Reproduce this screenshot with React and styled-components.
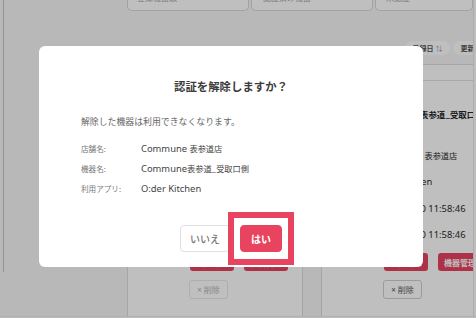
import React from "react";
import styled, { createGlobalStyle } from "styled-components";

const GlobalStyle = createGlobalStyle`
  html, body {
    margin: 0;
    padding: 0;
  }
  body {
    font-family: "Noto Sans", "Noto Sans CJK JP", sans-serif;
    color: #333;
  }
  * { box-sizing: border-box; }
`;

const RED = "#e8435f";

// page under the dialog
const Page = styled.div`
  position: relative;
  width: 476px;
  height: 318px;
  overflow: hidden;
  background: #f6f6f6;
  display: flex;
  flex-direction: column;
`;

const Body = styled.div`
  flex: 1;
  display: flex;
  overflow: hidden;
`;

const SideEdge = styled.div`
  width: 4px;
  height: 272px;
  border-right: 1px solid #c4c4c4;
  flex-shrink: 0;
`;

const Main = styled.div`
  flex: 1;
  padding-left: 123px;
  display: flex;
  flex-direction: column;
  overflow: hidden;
`;

const ScrollStrip = styled.div`
  width: 3px;
  flex-shrink: 0;
  background: #fdfdfd;
  border-left: 1px solid #e6e6e6;
`;

const BottomStrip = styled.div`
  height: 2px;
  flex-shrink: 0;
  background: #fdfdfd;
  border-top: 1px solid #ececec;
`;

const SummaryRow = styled.div`
  flex-shrink: 0;
  display: grid;
  grid-template-columns: 122px 122px 1fr;
  gap: 2px;
  height: 11px;
`;

const SummaryCard = styled.div`
  background: #fff;
  border: 1px solid #d8d8d8;
  border-top: none;
  border-radius: 0 0 5px 5px;
  overflow: hidden;
  padding-left: ${(p) => p.$pad}px;
`;

const SummaryText = styled.div`
  margin-top: -7px;
  font-size: 8px;
  line-height: 9px;
  color: #aaa;
`;

const SortBar = styled.div`
  flex-shrink: 0;
  display: flex;
  gap: 3px;
  margin-top: 30px;
  padding-left: 278px;
  height: 14px;
`;

const Pill = styled.div`
  flex-shrink: 0;
  width: ${(p) => p.$w}px;
  height: 14px;
  border-radius: 7px;
  background: #fff;
  display: flex;
  align-items: center;
  justify-content: center;
  gap: 2px;
  font-size: 7px;
  font-weight: 700;
  color: #555;
`;

const SortMark = styled.span`
  color: #999;
  font-weight: 400;
  font-size: 7px;
`;

const DeviceGrid = styled.div`
  flex-shrink: 0;
  display: grid;
  grid-template-columns: 176px 176px;
  gap: 18px;
  margin-top: 9px;
`;

const DeviceCard = styled.div`
  background: #fff;
  border: 1px solid #dedede;
  border-radius: 6px;
  height: 300px;
`;

const CardHeader = styled.div`
  height: 16px;
  border-bottom: 1px solid #e2e2e2;
`;

const CardBody = styled.div`
  padding: 25px 0 0 10px;
  display: flex;
  flex-direction: column;
`;

const InfoRow = styled.div`
  display: flex;
  align-items: center;
  height: ${(p) => (p.$title ? 16 : 26.5)}px;
  margin-bottom: ${(p) => (p.$title ? 20 : 0)}px;
  white-space: nowrap;
`;

const InfoLabel = styled.span`
  width: ${(p) => p.$w || 44}px;
  flex-shrink: 0;
  font-size: 7.5px;
  color: #777;
`;

// values: latin letters a little larger than the japanese glyphs
const MixedText = styled.span`
  font-family: "Noto Sans", "Noto Sans CJK JP", sans-serif;
  font-size: ${(p) => p.$size}px;
  font-weight: ${(p) => (p.$bold ? 700 : 400)};
  color: ${(p) => p.$color};
  white-space: nowrap;
`;

const Cjk = styled.span`
  font-family: "Noto Sans CJK JP", sans-serif;
  font-size: ${(p) => p.$size}px;
`;

const CJK_RUN = /([\u3000-\u9fff\uff00-\uffef_]+)/;

function Mixed({ text, size = 9.4, cjk = 8.2, bold, color = "#2b2b2b" }) {
  const parts = text.split(CJK_RUN).filter(Boolean);
  return (
    <MixedText $size={size} $bold={bold} $color={color}>
      {parts.map((part, i) =>
        CJK_RUN.test(part) ? (
          <Cjk key={i} $size={cjk}>
            {part}
          </Cjk>
        ) : (
          part
        )
      )}
    </MixedText>
  );
}

const CardActions = styled.div`
  display: flex;
  gap: 10px;
  margin-top: 5px;
  padding-left: 52px;
`;

const RedButton = styled.div`
  flex-shrink: 0;
  width: 44px;
  height: 18px;
  border-radius: 3px;
  background: ${RED};
  color: #fff;
  font-size: 8px;
  font-weight: 700;
  display: flex;
  align-items: center;
  justify-content: center;
`;

const DeleteButton = styled.div`
  width: 39px;
  height: 19px;
  margin: 9px 0 0 51px;
  border: 1px solid #cfcfcf;
  border-radius: 3px;
  font-size: 8px;
  color: #555;
  display: flex;
  align-items: center;
  justify-content: center;
  gap: 1px;
  opacity: ${(p) => (p.$faded ? 0.45 : 1)};
`;

// dialog layer
const Overlay = styled.div`
  position: absolute;
  inset: 0;
  background: rgba(0, 0, 0, 0.25);
`;

const Dialog = styled.div`
  position: absolute;
  left: 39px;
  top: 46px;
  width: 384px;
  height: 221px;
  background: #fff;
  border-radius: 6px;
  padding: 33px 42px 15px;
  display: flex;
  flex-direction: column;
`;

const DialogTitle = styled.div`
  text-align: center;
  font-size: 11.4px;
  line-height: 16px;
  font-weight: 700;
  color: #3c3c3c;
`;

const DialogText = styled.div`
  margin-top: 21px;
  font-size: 8.9px;
  line-height: 12px;
  color: #666;
`;

const DetailList = styled.div`
  margin-top: 10px;
  display: flex;
  flex-direction: column;
`;

const DetailRow = styled.div`
  display: flex;
  align-items: center;
  height: 20px;
`;

const DetailLabel = styled.span`
  width: 60px;
  font-size: 7.6px;
  color: #777;
`;

const ButtonRow = styled.div`
  margin-top: auto;
  display: flex;
  justify-content: center;
  gap: 10px;
`;

const DialogButton = styled.div`
  width: ${(p) => p.$w}px;
  height: 27px;
  border-radius: 4px;
  display: flex;
  align-items: center;
  justify-content: center;
  font-size: 10px;
  border: 1px solid ${(p) => (p.$primary ? RED : "#e0e0e0")};
  background: ${(p) => (p.$primary ? RED : "#fff")};
  color: ${(p) => (p.$primary ? "#fff" : "#777")};
  font-weight: ${(p) => (p.$primary ? 700 : 500)};
`;

// annotation box drawn over the confirm button
const Highlight = styled.div`
  position: absolute;
  left: 228px;
  top: 212px;
  width: 66px;
  height: 53px;
  border: 6px solid ${RED};
`;

const devices = [
  {
    name: "Commune表参道_受取口側",
    store: "Commune 表参道店",
    app: "O:der Kitchen",
    created: "2023/12/20 11:58:46",
    updated: "2023/12/20 11:58:46",
    faded: true,
  },
  {
    name: "Commune表参道_受取口側",
    store: "Commune 表参道店",
    app: "O:der Kitchen",
    created: "2023/12/20 11:58:46",
    updated: "2023/12/20 11:58:46",
    faded: false,
  },
];

function Device({ device }) {
  return (
    <DeviceCard>
      <CardHeader />
      <CardBody>
        <InfoRow $title>
          <InfoLabel $w={39}>機器名</InfoLabel>
          <Mixed text={device.name} size={9.6} cjk={8.4} bold color="#262626" />
        </InfoRow>
        <InfoRow>
          <InfoLabel>店舗名</InfoLabel>
          <Mixed text={device.store} />
        </InfoRow>
        <InfoRow>
          <InfoLabel $w={40}>利用アプリ</InfoLabel>
          <Mixed text={device.app} />
        </InfoRow>
        <InfoRow>
          <InfoLabel>登録日</InfoLabel>
          <Mixed text={device.created} />
        </InfoRow>
        <InfoRow>
          <InfoLabel>更新日</InfoLabel>
          <Mixed text={device.updated} />
        </InfoRow>
        <CardActions>
          <RedButton>認証解除</RedButton>
          <RedButton>機器管理</RedButton>
        </CardActions>
        <DeleteButton $faded={device.faded}>× 削除</DeleteButton>
      </CardBody>
    </DeviceCard>
  );
}

function App() {
  return (
    <Page>
      <GlobalStyle />
      <Body>
        <SideEdge />
        <Main>
          <SummaryRow>
            <SummaryCard $pad={9}>
              <SummaryText>登録機器数</SummaryText>
            </SummaryCard>
            <SummaryCard $pad={11}>
              <SummaryText>認証済み機器</SummaryText>
            </SummaryCard>
            <SummaryCard $pad={10}>
              <SummaryText>未認証</SummaryText>
            </SummaryCard>
          </SummaryRow>
          <SortBar>
            <Pill $w={45}>
              登録日 <SortMark>⇅</SortMark>
            </Pill>
            <Pill $w={45}>
              更新日 <SortMark>⇅</SortMark>
            </Pill>
          </SortBar>
          <DeviceGrid>
            {devices.map((d, i) => (
              <Device key={i} device={d} />
            ))}
          </DeviceGrid>
        </Main>
        <ScrollStrip />
      </Body>
      <BottomStrip />

      <Overlay />
      <Dialog>
        <DialogTitle>認証を解除しますか？</DialogTitle>
        <DialogText>解除した機器は利用できなくなります。</DialogText>
        <DetailList>
          <DetailRow>
            <DetailLabel>店舗名:</DetailLabel>
            <Mixed text="Commune 表参道店" color="#444" />
          </DetailRow>
          <DetailRow>
            <DetailLabel>機器名:</DetailLabel>
            <Mixed text="Commune表参道_受取口側" color="#444" />
          </DetailRow>
          <DetailRow>
            <DetailLabel>利用アプリ:</DetailLabel>
            <Mixed text="O:der Kitchen" color="#444" />
          </DetailRow>
        </DetailList>
        <ButtonRow>
          <DialogButton $w={50}>いいえ</DialogButton>
          <DialogButton $w={42} $primary>
            はい
          </DialogButton>
        </ButtonRow>
      </Dialog>
      <Highlight />
    </Page>
  );
}

export default App;
